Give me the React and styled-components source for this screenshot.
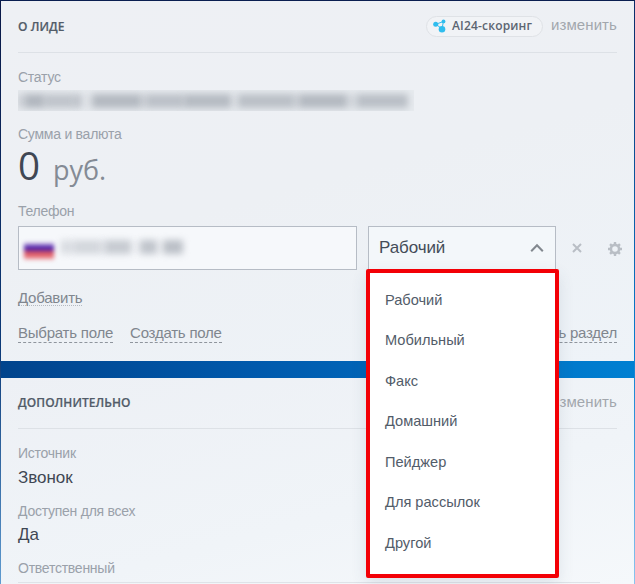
import React from "react";
import styled, { createGlobalStyle } from "styled-components";

const GlobalStyle = createGlobalStyle`
  *, *::before, *::after { box-sizing: border-box; }
  body { margin: 0; font-family: "Liberation Sans", Arial, sans-serif; }
`;

const Page = styled.main`
  width: 635px;
  height: 584px;
  padding: 1px 1px 0;
  overflow: hidden;
  display: flex;
  flex-direction: column;
  gap: 17px;
  background:
    linear-gradient(#0a1e50, #0a1e50) 0 0 / 100% 1px no-repeat,
    linear-gradient(to bottom, #0a1846, #0c3a78 60%, #5f9bd0) 0 0 / 1px 100% no-repeat,
    linear-gradient(to bottom, #0a2a68, #0a7fd0 60%, #8cc4ee) 100% 0 / 1px 100% no-repeat,
    linear-gradient(to right, #00438c, #0059ac 40%, #0080d2);
`;

const Panel = styled.section`
  flex: none;
  height: ${(p) => p.$height}px;
  padding: 0 17px;
  background: ${(p) => p.$fill};
`;

const Header = styled.header`
  height: ${(p) => p.$height}px;
  display: flex;
  align-items: center;
  border-bottom: 1px solid #dde1e6;
`;

const Title = styled.h2`
  margin: 0;
  flex: 1;
  font: 600 12px/16px "Open Sans", sans-serif;
  letter-spacing: 0.05px;
  color: #525c69;
  -webkit-text-stroke: 0.2px #525c69;
`;

const Score = styled.button`
  width: 117px;
  height: 21px;
  margin-right: 8px;
  padding: 0 0 1px 6px;
  display: flex;
  align-items: center;
  gap: 6px;
  border: 1px solid #dfe2e6;
  border-radius: 11px;
  background: #f1f3f6;
  color: #5c6571;
  font: 600 12px/16px "Open Sans", sans-serif;
  letter-spacing: 0.18px;
  white-space: nowrap;
`;

const Edit = styled.a`
  padding-bottom: 3px;
  font-size: 15px;
  line-height: 18px;
  letter-spacing: 0.1px;
  color: #a2a7ad;
`;

const Label = styled.div`
  height: 16px;
  margin-top: ${(p) => p.$top}px;
  font-size: 14px;
  line-height: 16px;
  letter-spacing: -0.25px;
  color: #9aa1aa;
`;

const Value = styled.div`
  height: 20px;
  margin-top: ${(p) => p.$top}px;
  font-size: 17px;
  line-height: 20px;
  letter-spacing: -0.05px;
  color: #3f4753;
`;

const Hidden = styled.div`
  width: ${(p) => p.$width}px;
  height: ${(p) => p.$height}px;
  margin-top: ${(p) => p.$top || 0}px;
  padding-bottom: ${(p) => p.$lift || 0}px;
  display: flex;
  align-items: center;
  overflow: ${(p) => (p.$clip ? "hidden" : "visible")};
  background: ${(p) => (p.$clip ? "rgba(120, 128, 140, 0.05)" : "none")};
`;

const Smudge = styled.span`
  flex: ${(p) => p.$w} 0 0;
  height: 14px;
  background: #858c97;
  opacity: ${(p) => p.$o};
  filter: blur(3.5px);
`;

const Money = styled.div`
  height: 40px;
  margin-top: 3px;
  display: flex;
  align-items: baseline;
  gap: 13px;
  font: 38.5px/40px "Open Sans", sans-serif;
  color: #3f4753;
`;

const Currency = styled.span`
  font-size: 27px;
  color: #848b95;
`;

const PhoneRow = styled.div`
  position: relative;
  margin-top: 7px;
  height: 44px;
  display: flex;
  align-items: center;
  color: #b9bec5;
`;

const PhoneField = styled.div`
  flex: none;
  width: 339px;
  height: 44px;
  margin-right: 11px;
  padding-left: 5px;
  display: flex;
  align-items: center;
  gap: 7px;
  border: 1px solid #b6bcc5;
  background: #f6f8fb;
`;

const Flag = styled.span`
  width: 30px;
  height: 18px;
  margin-top: 6px;
  background: linear-gradient(#f3f0f8, #4f1fa8 28%, #4f1fa8 42%, #e0565f 58%, #e5737a 85%, #f7e9ec);
  filter: blur(2px);
`;

const Select = styled.div`
  flex: none;
  width: 188px;
  height: 44px;
  padding: 0 11px 0 10px;
  display: flex;
  align-items: center;
  justify-content: space-between;
  border: 1px solid #b6bcc5;
  background: #f3f7fa;
  font-size: 17px;
  letter-spacing: -0.1px;
  color: #444c58;
`;

const Menu = styled.ul`
  position: absolute;
  z-index: 2;
  left: 348px;
  top: 43px;
  width: 193px;
  height: 309px;
  margin: 0;
  padding: 6.5px 0 0 15px;
  list-style: none;
  border: 4px solid #f30006;
  border-radius: 2px;
  background: #fff;
  box-shadow: 0 6px 16px rgba(60, 80, 110, 0.12);
`;

const MenuItem = styled.li`
  height: 40.5px;
  font-size: 14.6px;
  line-height: 41px;
  color: #525c69;
`;

const IconSlot = styled.span`
  flex: none;
  display: flex;
  padding-top: ${(p) => p.$drop || 0}px;
  margin-left: ${(p) => p.$left}px;
`;

const AddRow = styled.div`
  margin-top: 19px;
  height: 17px;
  display: flex;
`;

const Links = styled.nav`
  margin-top: 18px;
  display: flex;
  gap: 17px;
`;

const Link = styled.a`
  height: ${(p) => (p.$dotted ? 17 : 19)}px;
  font-size: 15px;
  line-height: 17px;
  letter-spacing: -0.23px;
  color: #80868e;
  border-bottom: 1px ${(p) => (p.$dotted ? "dotted #b5bac1" : "dashed #8f959d")};
  white-space: nowrap;
  &:nth-child(3) { margin-left: auto; }
`;

const Divider = styled.hr`
  width: 582px;
  margin: 6px 0 0;
  border: 0;
  border-top: 1px solid #dfe3e8;
`;

const menuItems = ["Рабочий", "Мобильный", "Факс", "Домашний", "Пейджер", "Для рассылок", "Другой"];
const statusCells = [[6, .3], [15, .55], [25, .4], [6, .45], [9, .08], [40, .52], [4, .3], [32, .44], [38, .5], [6, .1], [46, .45], [4, .3], [40, .52], [8, .2], [42, .46], [5, 0]];
const phoneCells = [[8, .28], [4, .22], [28, .3], [4, .2], [25, .42], [9, .06], [17, .48], [6, .05], [20, .52], [3, 0]];

const Redacted = ({ cells, ...size }) => (
  <Hidden aria-hidden="true" {...size}>
    {cells.map(([w, o], i) => <Smudge key={i} $w={w} $o={o} />)}
  </Hidden>
);

const NodesIcon = () => (
  <svg width="13" height="14" viewBox="0 0 13 14" fill="#2fbdee" stroke="#2fbdee">
    <path d="M3 5.2 10.4 2.5 9 10" fill="none" strokeWidth="1" />
    <path d="M3 5.2 9 10" fill="none" strokeWidth="1" />
    <circle cx="2.7" cy="5.2" r="2.5" stroke="none" />
    <circle cx="10.5" cy="2.4" r="1.9" stroke="none" />
    <circle cx="9" cy="10.3" r="3.3" stroke="none" />
  </svg>
);

const ChevronIcon = () => (
  <svg width="14" height="10" viewBox="0 0 14 10" fill="none" stroke="#82888f" strokeWidth="2">
    <path d="m1.2 8.2 5.8-6 5.8 6" />
  </svg>
);

const CrossIcon = () => (
  <svg width="10" height="10" viewBox="0 0 10 10" fill="none" stroke="currentColor" strokeWidth="2">
    <path d="m1 1 8 8M9 1 1 9" />
  </svg>
);

const GearIcon = () => (
  <svg width="14" height="14" viewBox="0 0 14 14" fill="none" stroke="currentColor">
    <circle cx="7" cy="7" r="4.1" strokeWidth="2.6" />
    <path d="M7 0v2.5M7 11.5V14M0 7h2.5M11.5 7H14M2.05 2.05 3.8 3.8M10.2 10.2l1.75 1.75M11.95 2.05 10.2 3.8M3.8 10.2l-1.75 1.75" strokeWidth="2.4" />
  </svg>
);

export default function App() {
  return (
    <Page>
      <GlobalStyle />
      <Panel $height={360} $fill="linear-gradient(165deg, #eef0f4, #edf0f4 50%, #eef3f8)">
        <Header $height={52}>
          <Title>О ЛИДЕ</Title>
          <Score><NodesIcon />AI24-скоринг</Score>
          <Edit>изменить</Edit>
        </Header>
        <Label $top={16}>Статус</Label>
        <Redacted cells={statusCells} $width={396} $height={21} $top={5} $clip />
        <Label $top={15}>Сумма и валюта</Label>
        <Money>0<Currency>руб.</Currency></Money>
        <Label $top={18}>Телефон</Label>
        <PhoneRow>
          <PhoneField>
            <Flag />
            <Redacted cells={phoneCells} $width={125} $height={26} $lift={2} />
          </PhoneField>
          <Select>Рабочий<ChevronIcon /></Select>
          <IconSlot $left={16}><CrossIcon /></IconSlot>
          <IconSlot $left={26} $drop={2}><GearIcon /></IconSlot>
          <Menu>{menuItems.map((item) => <MenuItem key={item}>{item}</MenuItem>)}</Menu>
        </PhoneRow>
        <AddRow><Link $dotted>Добавить</Link></AddRow>
        <Links>
          <Link>Выбрать поле</Link>
          <Link>Создать поле</Link>
          <Link>Удалить раздел</Link>
        </Links>
      </Panel>
      <Panel $height={206} $fill="linear-gradient(165deg, #edf0f5, #f0f4f8 60%, #f5f8fb)">
        <Header $height={51}>
          <Title>ДОПОЛНИТЕЛЬНО</Title>
          <Edit>изменить</Edit>
        </Header>
        <Label $top={16}>Источник</Label>
        <Value $top={7}>Звонок</Value>
        <Label $top={15}>Доступен для всех</Label>
        <Value $top={6}>Да</Value>
        <Label $top={15}>Ответственный</Label>
        <Divider />
      </Panel>
    </Page>
  );
}
